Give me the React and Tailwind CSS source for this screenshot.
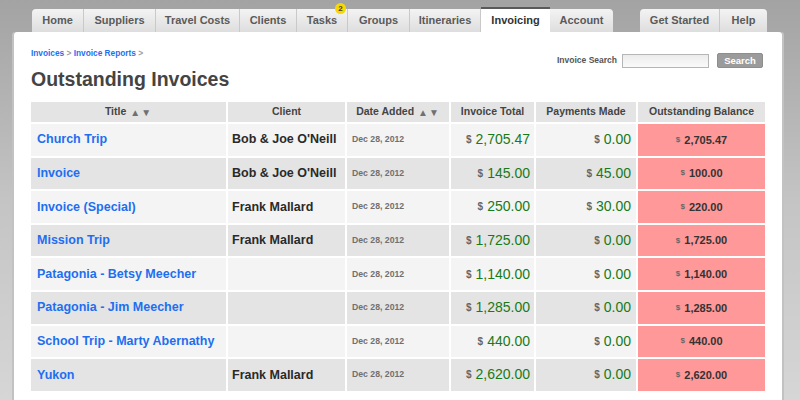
import React from 'react';

const tabs = [
  { label: 'Home', w: 'w-[52px]', cls: 'rounded-tl-[4px]' },
  { label: 'Suppliers', w: 'w-[72px]' },
  { label: 'Travel Costs', w: 'w-[84px]' },
  { label: 'Clients', w: 'w-[57px]' },
  { label: 'Tasks', w: 'w-[51px]', badge: 2 },
  { label: 'Groups', w: 'w-[62px]' },
  { label: 'Itineraries', w: 'w-[71px]' },
  { label: 'Invoicing', w: 'w-[69px]', active: true },
  { label: 'Account', w: 'w-[63px]', cls: 'rounded-tr-[4px]' },
];

const rightTabs = [
  { label: 'Get Started', w: 'w-[80px]', cls: 'rounded-tl-[4px]' },
  { label: 'Help', w: 'w-[47px]', cls: 'rounded-tr-[4px]' },
];

const invoices = [
  { title: 'Church Trip', client: "Bob & Joe O'Neill", total: '2,705.47', paid: '0.00', due: '2,705.47' },
  { title: 'Invoice', client: "Bob & Joe O'Neill", total: '145.00', paid: '45.00', due: '100.00' },
  { title: 'Invoice (Special)', client: 'Frank Mallard', total: '250.00', paid: '30.00', due: '220.00' },
  { title: 'Mission Trip', client: 'Frank Mallard', total: '1,725.00', paid: '0.00', due: '1,725.00' },
  { title: 'Patagonia - Betsy Meecher', client: '', total: '1,140.00', paid: '0.00', due: '1,140.00' },
  { title: 'Patagonia - Jim Meecher', client: '', total: '1,285.00', paid: '0.00', due: '1,285.00' },
  { title: 'School Trip - Marty Abernathy', client: '', total: '440.00', paid: '0.00', due: '440.00' },
  { title: 'Yukon', client: 'Frank Mallard', total: '2,620.00', paid: '0.00', due: '2,620.00' },
];

const Tab = ({ tab }) => {
  if (tab.active) {
    return (
      <div className={`${tab.w} h-[25px] -mt-[2px] bg-white border-t-2 border-[#5a5a5a] flex items-center justify-center text-[11px] font-bold text-[#333] relative z-10`}>
        {tab.label}
      </div>
    );
  }
  return (
    <div className={`${tab.w} ${tab.cls || ''} h-[23px] bg-gradient-to-b from-[#f3f3f3] to-[#dedede] border-r border-[#c9c9c9] last:border-r-0 flex items-center justify-center text-[11px] font-bold text-[#5a5a5a] relative`}>
      {tab.label}
      {tab.badge && (
        <span className="absolute -top-[6px] right-[1px] w-[11px] h-[11px] rounded-full bg-[#f7d900] text-[8px] leading-[11px] text-center font-bold text-[#444]">
          {tab.badge}
        </span>
      )}
    </div>
  );
};

const Arrows = () => (
  <span className="ml-[4px] text-[10px] text-[#707070] tracking-[1px]">▲▼</span>
);

export default function App() {
  return (
    <div className="w-[800px] h-[400px] overflow-hidden bg-gradient-to-b from-[#a3a3a3] via-[#c4c4c4] to-[#d6d6d6] font-['Liberation_Sans',Arial,sans-serif]">
      <div className="pt-[9px] flex items-end">
        <div className="ml-[32px] flex items-end">
          {tabs.map((t) => (
            <Tab key={t.label} tab={t} />
          ))}
        </div>
        <div className="ml-[27px] flex items-end">
          {rightTabs.map((t) => (
            <Tab key={t.label} tab={t} />
          ))}
        </div>
      </div>

      <div className="ml-[12px] w-[772px] h-[400px] border-x-2 border-[#c2c2c2] rounded-t-[3px]">
        <div className="bg-white h-full rounded-t-[3px] pl-[17px] pr-[17px] pt-[16px]">
          <div className="flex items-start justify-between">
            <div>
              <div className="text-[8.3px] font-bold leading-[10px] text-[#9a9a9a]">
                <span className="text-[#1e6ff0]">Invoices</span> &gt;{' '}
                <span className="text-[#1e6ff0]">Invoice Reports</span> &gt;
              </div>
              <h1 className="mt-[9px] text-[19.5px] leading-[24px] font-bold text-[#444]">Outstanding Invoices</h1>
            </div>
            <div className="flex items-center mt-[5px] mr-[2px]">
              <span className="text-[8.5px] font-bold text-[#555] mr-[5px]">Invoice Search</span>
              <div className="w-[87px] h-[14px] border border-[#b5b5b5] bg-gradient-to-b from-[#ececec] to-[#fafafa]" />
              <button className="ml-[8px] w-[46px] h-[15px] rounded-[2px] bg-[#9b9b9b] border border-[#8e8e8e] text-white text-[9.5px] font-bold leading-[13px]">
                Search
              </button>
            </div>
          </div>

          <div className="mt-[11px] grid grid-cols-[195px_117px_102px_83px_100px_127px] gap-[2px] bg-white">
            <div className="h-[20px] bg-[#e4e4e4] flex items-center justify-center text-[10.5px] font-bold text-[#444]">
              Title<Arrows />
            </div>
            <div className="h-[20px] bg-[#e4e4e4] flex items-center justify-center text-[10.5px] font-bold text-[#444]">Client</div>
            <div className="h-[20px] bg-[#e4e4e4] flex items-center justify-center text-[10.5px] font-bold text-[#444]">
              Date Added<Arrows />
            </div>
            <div className="h-[20px] bg-[#e4e4e4] flex items-center justify-center text-[10.5px] font-bold text-[#444]">Invoice Total</div>
            <div className="h-[20px] bg-[#e4e4e4] flex items-center justify-center text-[10.5px] font-bold text-[#444]">Payments Made</div>
            <div className="h-[20px] bg-[#e4e4e4] flex items-center justify-center text-[10.5px] font-bold text-[#444]">Outstanding Balance</div>

            {invoices.map((inv, i) => {
              const bg = i % 2 === 0 ? 'bg-[#f4f4f4]' : 'bg-[#e4e4e4]';
              return (
                <React.Fragment key={inv.title}>
                  <div className={`${bg} h-[31.6px] flex items-center pl-[6px] text-[12.5px] font-bold text-[#1e6ff0]`}>{inv.title}</div>
                  <div className={`${bg} h-[31.6px] flex items-center pl-[4px] text-[12.5px] font-bold text-[#2a2a2a]`}>{inv.client}</div>
                  <div className={`${bg} h-[31.6px] flex items-center pl-[5px] text-[8.7px] font-bold text-[#707070]`}>Dec 28, 2012</div>
                  <div className={`${bg} h-[31.6px] flex items-center justify-end pr-[4px] text-[14px] text-[#187a18]`}>
                    <span className="text-[10px] font-bold text-[#666] mr-[4px]">$</span>
                    {inv.total}
                  </div>
                  <div className={`${bg} h-[31.6px] flex items-center justify-end pr-[5px] text-[14px] text-[#187a18]`}>
                    <span className="text-[10px] font-bold text-[#666] mr-[4px]">$</span>
                    {inv.paid}
                  </div>
                  <div className="bg-[#ff9898] h-[31.6px] flex items-center justify-center text-[11px] font-bold text-[#333]">
                    <span className="text-[8px] font-bold text-[#666] mr-[4px]">$</span>
                    {inv.due}
                  </div>
                </React.Fragment>
              );
            })}
          </div>
        </div>
      </div>
    </div>
  );
}
